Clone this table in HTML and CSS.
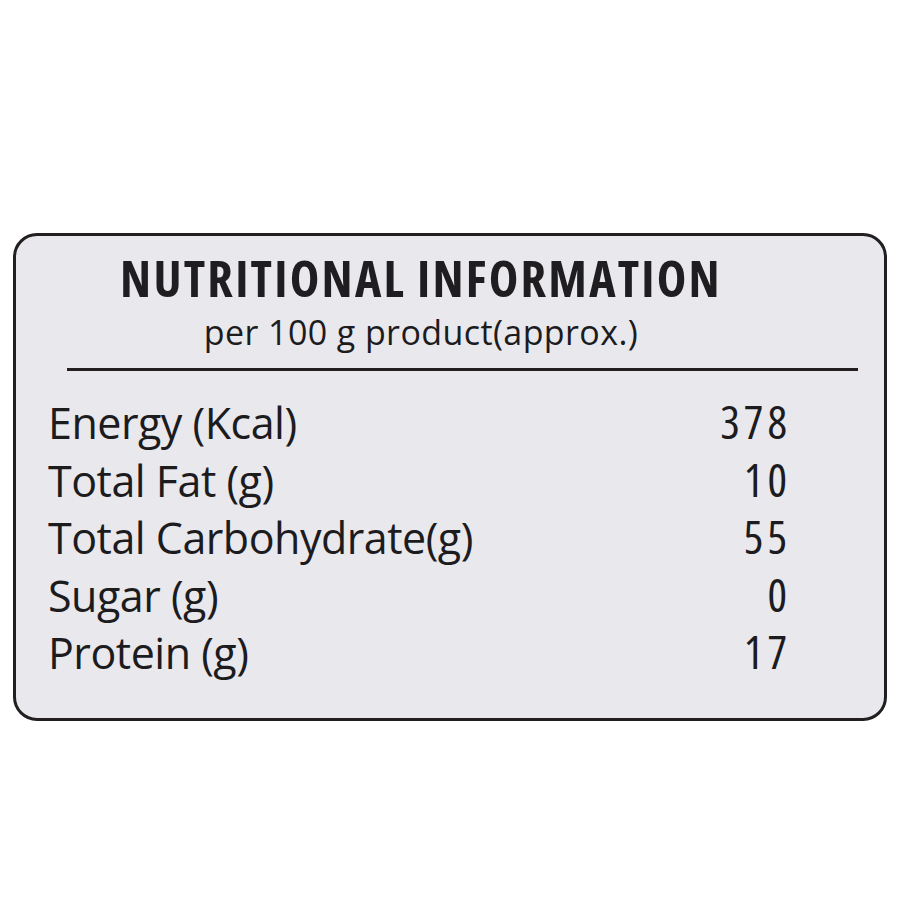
FILE: index.html
```html
<!DOCTYPE html>
<html lang="en">
<head>
<meta charset="utf-8">
<title>Nutritional Information</title>
<link rel="stylesheet" href="styles.css">
</head>
<body>
<div class="card">
  <div class="header">
    <h1 class="title">NUTRITIONAL INFORMATION</h1>
    <p class="subtitle">per 100 g product(approx.)</p>
  </div>
  <hr class="rule">
  <div class="rows">
    <div class="row"><span class="label">Energy (Kcal)</span><span class="value">378</span></div>
    <div class="row"><span class="label">Total Fat (g)</span><span class="value">10</span></div>
    <div class="row"><span class="label">Total Carbohydrate(g)</span><span class="value">55</span></div>
    <div class="row"><span class="label">Sugar (g)</span><span class="value">0</span></div>
    <div class="row"><span class="label">Protein (g)</span><span class="value">17</span></div>
  </div>
</div>
</body>
</html>
```
FILE: styles.css
```css
html, body {
  margin: 0;
  padding: 0;
  background: #ffffff;
}
body {
  font-family: "Open Sans", "Liberation Sans", sans-serif;
  color: #1c1b1d;
}
.card {
  box-sizing: border-box;
  width: 874px;
  height: 488px;
  margin: 233px 0 0 13px;
  border: 3px solid #231f20;
  border-radius: 24px;
  background: #e9e8ed;
  display: flex;
  flex-direction: column;
}
.header {
  display: flex;
  flex-direction: column;
  align-items: center;
  padding: 9px 58px 0 0;
}
.title {
  margin: 0;
  font-stretch: 75%;
  font-weight: bold;
  font-size: 50px;
  line-height: 66px;
  letter-spacing: 2.2px;
  color: #1f1d1f;
}
.subtitle {
  margin: 0;
  font-size: 34px;
  line-height: 42px;
  letter-spacing: 0.4px;
}
.rule {
  margin: 15px 26px 0 51px;
  border: 0;
  height: 3px;
  background: #231f20;
}
.rows {
  display: flex;
  flex-direction: column;
  padding: 23px 97px 0 32px;
}
.row {
  display: flex;
  justify-content: space-between;
  align-items: baseline;
  font-size: 43px;
  line-height: 57.5px;
}
.label {
  letter-spacing: -0.5px;
}
.value {
  font-stretch: 87.5%;
  font-size: 46px;
  line-height: 55px;
  letter-spacing: 4px;
  margin-right: -4px;
}
```
